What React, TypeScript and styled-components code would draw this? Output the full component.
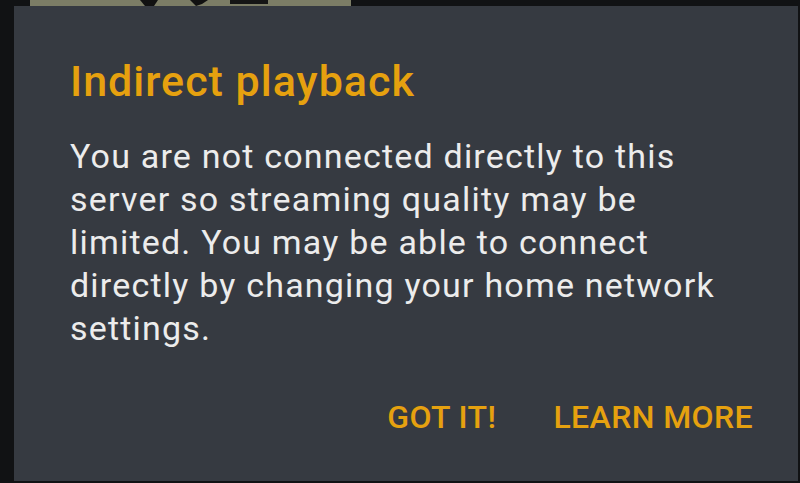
import React from "react";
import styled, { createGlobalStyle } from "styled-components";

const Global = createGlobalStyle`
  html, body { margin: 0; padding: 0; background: #111214; }
  body { width: 800px; height: 483px; overflow: hidden; font-family: Roboto, "Noto Sans", sans-serif; }
`;

const Screen = styled.div`
  width: 800px;
  height: 483px;
  display: flex;
  flex-direction: column;
  background: #111214;
`;

const TopStrip = styled.div`
  height: 6px;
  display: flex;
  padding-left: 30px;
`;

const Thumb = styled.div`
  width: 321px;
  height: 6px;
  background: #7c7d66;
  position: relative;
  overflow: hidden;
`;

const Main = styled.div`
  display: flex;
  padding-left: 14px;
`;

const Dialog = styled.div`
  width: 784px;
  height: 475px;
  background: #363a41;
  box-sizing: border-box;
  padding: 50px 40px 0 56px;
  display: flex;
  flex-direction: column;
`;

const Title = styled.h1`
  margin: 0;
  font-family: Roboto, "Noto Sans", sans-serif;
  font-weight: 500;
  font-size: 43px;
  letter-spacing: 1px;
  line-height: 50px;
  color: #e6a10f;
`;

const Body = styled.p`
  margin: 29px 0 0;
  font-family: Roboto, "Noto Sans", sans-serif;
  font-weight: 400;
  font-size: 34px;
  letter-spacing: 1.2px;
  line-height: 43px;
  color: #ececec;
  max-width: 665px;
`;

const Actions = styled.div`
  display: flex;
  justify-content: flex-end;
  gap: 57px;
  margin-top: 47px;
  padding-right: 5px;
`;

const Action = styled.button`
  background: none;
  border: none;
  padding: 0;
  font-family: Roboto, "Noto Sans", sans-serif;
  font-weight: 500;
  font-size: 32px;
  letter-spacing: 0.4px;
  line-height: 40px;
  color: #e6a10f;
  cursor: pointer;
`;

export default function App() {
  return (
    <Screen>
      <Global />
      <TopStrip>
        <Thumb>
          <svg width="321" height="6" viewBox="0 0 321 6" style={{ position: "absolute", left: 0, top: 0 }}>
            <path d="M110 0 L128 0 L124 6 L115 6 Z" fill="#111" />
            <path d="M160 0 L178 0 L172 4 L166 6 Z" fill="#111" />
            <rect x="200" y="0" width="38" height="4" fill="#151515" />
          </svg>
        </Thumb>
      </TopStrip>
      <Main>
        <Dialog>
          <Title>Indirect playback</Title>
          <Body>
            You are not connected directly to this server so streaming quality may be limited. You may be able to connect directly by changing your home network settings.
          </Body>
          <Actions>
            <Action>GOT IT!</Action>
            <Action>LEARN MORE</Action>
          </Actions>
        </Dialog>
      </Main>
    </Screen>
  );
}
